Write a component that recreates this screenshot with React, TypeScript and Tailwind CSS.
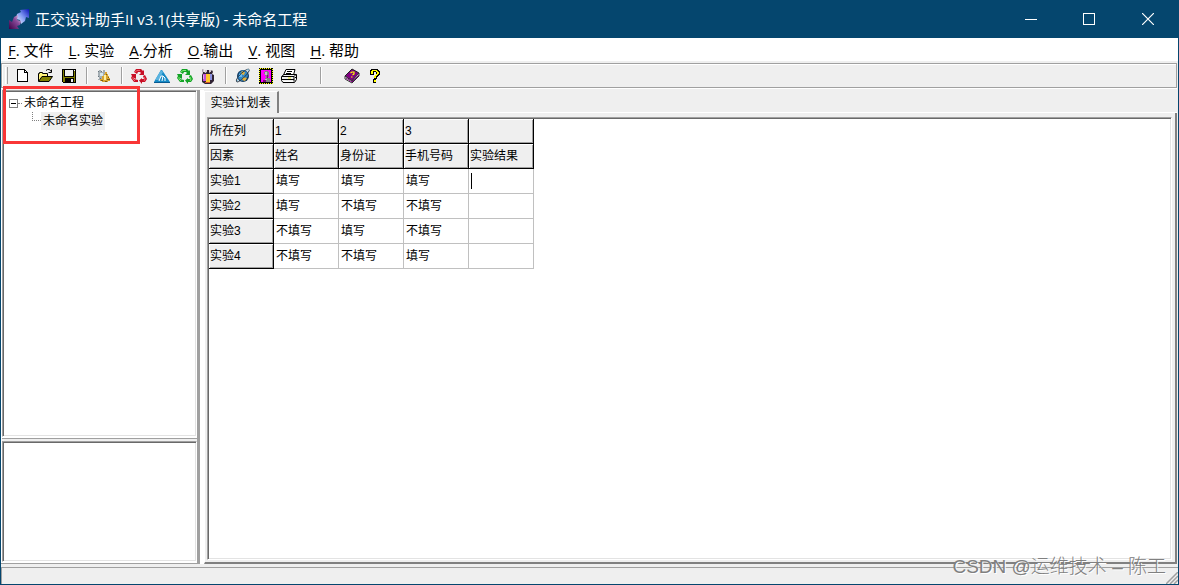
import React, { useState } from 'react';
import clsx from 'clsx';

const menus = [
  { key: 'F', rest: '. 文件' },
  { key: 'L', rest: '. 实验' },
  { key: 'A', rest: '.分析' },
  { key: 'O', rest: '.输出' },
  { key: 'V', rest: '. 视图' },
  { key: 'H', rest: '. 帮助' },
];

const columns = ['1', '2', '3', ''];
const factors = ['姓名', '身份证', '手机号码', '实验结果'];
const rows = [
  { name: '实验1', values: ['填写', '填写', '填写'] },
  { name: '实验2', values: ['填写', '不填写', '不填写'] },
  { name: '实验3', values: ['不填写', '填写', '不填写'] },
  { name: '实验4', values: ['不填写', '不填写', '填写'] },
];

const Icon = ({ children }: { children: React.ReactNode }) => (
  <svg viewBox="0 0 16 16" className="h-4 w-4 shrink-0" aria-hidden="true">
    {children}
  </svg>
);

const AppIcon = () => (
  <svg viewBox="0 0 22 22" className="h-[22px] w-[22px]" aria-hidden="true">
    <defs>
      <linearGradient id="up" x1="0" y1="1" x2="1" y2="0">
        <stop offset="0" stopColor="#f4f6ff" />
        <stop offset="0.5" stopColor="#7f9af2" />
        <stop offset="1" stopColor="#0a12b8" />
      </linearGradient>
      <linearGradient id="down" x1="0" y1="1" x2="1" y2="0">
        <stop offset="0" stopColor="#3d0046" />
        <stop offset="0.6" stopColor="#8a4c9c" />
        <stop offset="1" stopColor="#f3e2f5" />
      </linearGradient>
    </defs>
    <path d="M12 2 21 1 21 10 18 9 17 13 13 16 12 12 8 11 9 6 13 4z" fill="url(#up)" />
    <path d="M1 12 4 14 6 9 10 7 9 12 13 13 12 17 9 18 11 21 1 21z" fill="url(#down)" />
  </svg>
);

const NewIcon = () => (
  <Icon>
    <path d="M3.5 1.5h7l3 3v9h-10z" fill="#fff" stroke="#000" shapeRendering="crispEdges" />
    <path d="M10.5 1.5v3h3" fill="none" stroke="#000" shapeRendering="crispEdges" />
  </Icon>
);

const OpenIcon = () => (
  <Icon>
    <path d="M1.5 13V5.500h1v-1h3v1h5v3" fill="#ffff80" stroke="#000" />
    <path d="M2 6h8v3H5L2 13z" fill="#fff27a" />
    <path d="M1.500 13.500 5 8.500h10.500L12 13.500z" fill="#808000" stroke="#000" />
    <path d="M9 2.500 10.500 1.500h2l1.500 2M14.500 1.500v3h-3" fill="none" stroke="#000" />
  </Icon>
);

const SaveIcon = () => (
  <Icon>
    <g shapeRendering="crispEdges">
      <path d="M2.500 1.500h13v13h-12l-1-1z" fill="#808000" stroke="#000" />
      <path d="M5 2h8v6H5z" fill="#efefef" />
      <path d="M4 2h1v6h8V2h1v7H4zM5 10h9v5H5z" fill="#000" />
      <path d="M11 11h2v3h-2zM14 2h1v1h-1z" fill="#efefef" />
    </g>
  </Icon>
);

const GearIcon = () => (
  <Icon>
    <path d="M3 2h2v2H3zM7 2h2v2H7zM2 4h8v5H2zM3 9h6v2H3zM2 11h2v1H2z" fill="#a4aeb4" />
    <path d="M4 5h3v3H4z" fill="#d5e6ee" />
    <path d="M2 3h1v1H2zM5 3h1v1H5zM9 4h1v1H9zM2 8h1v1H2zM4 10h1v1H4z" fill="#66737b" />
    <path d="M9 4h2v2h1v2h1v2h1v3h-2v1H6v-1H4v-2h2V8h2V6h1z" fill="#d9a52f" />
    <path d="M8 7h2v5H8z" fill="#fff0a0" />
    <path d="M10 6h1v1h-1zM12 9h1v1h-1zM11 11h3v1h-3zM5 12h2v1H5zM9 13h2v1H9z" fill="#7d5b14" />
  </Icon>
);

const RecycleIcon = ({ color, light }: { color: string; light: string }) => (
  <Icon>
    <g fill={color}>
      <path d="M3 4 5 1h5l2 2 1-1v5H8l2-2-1-1H7L6 6z" />
      <path d="M12 8 14 7 16 11 14 14H11V16L8 12.500 11 10V11H13z" />
      <path d="M0 6H5V11L3.500 10 3 11 7 12V14H3L0 10 1 8z" />
    </g>
    <path d="M4 4 6 2.500h3M13 9l1 2-1 2M2 9v2l2 2" fill="none" stroke={light} />
  </Icon>
);

const TriangleIcon = () => (
  <Icon>
    <path d="M7 2h1l8 12-1 1H1l-1-1z" fill="#168ac5" />
    <path d="M7 2 1 12h4l4-8z" fill="#5ab3df" />
    <path d="m5 13 2-5h2l-1 5M9 8l2 2v3" fill="none" stroke="#fff" strokeWidth="1" />
    <path d="M0 14.500h16" stroke="#075a91" />
  </Icon>
);

const FigureIcon = () => (
  <Icon>
    <path d="M2 1h2v3l2 1 1-3h2v3l3-3 1 2-1 2 2 1v6l-3 3H5l-3-2V7l1-2z" fill="#302334" />
    <path d="M3 6h3v7H3z" fill="#c052d5" />
    <path d="M6 6h4v8H6z" fill="#ffc928" />
    <path d="M10 6h2v6h-2z" fill="#8b91df" />
    <path d="M2 1h2v3H3zM5 2h2v2H5zM9 2h2v2H9z" fill="#d4cad4" />
    <path d="M3 7h1v4H3z" fill="#e2a4ef" />
    <path d="M5 14h5v1H5z" fill="#d25728" />
  </Icon>
);

const GlobeIcon = () => (
  <Icon>
    <circle cx="8" cy="8" r="6" fill="#103a62" />
    <path d="M4 5 8 2l4 2 1 4-3 4-4 1-3-3z" fill="#3187c5" />
    <path d="m7 3 3 1-1 3-3-1zM8 9l4 1-2 3-3-1z" fill="#e4b33b" />
    <path d="M4 6h3v3H4z" fill="#64b5ec" />
    <path d="M2 14C0 13 3 8 8 4s7-3 6-1c-2 4-9 11-12 11z" fill="none" stroke="#26394a" />
    <path d="M12 2h2M2 12l1 1" stroke="#8ed0ef" />
  </Icon>
);

const StampIcon = () => (
  <Icon>
    <g shapeRendering="crispEdges">
      <path d="M1 0h14v16H1z" fill="#ffff00" />
      <path d="M1 .5h14M1 15.500h14" stroke="#000" strokeDasharray="1 1" />
      <path d="M1.500 0v16M14.500 0v16" stroke="#000" strokeDasharray="1 1" />
      <path d="M2 1h12v14H2z" fill="#000" />
      <path d="M3 2h10v12H3z" fill="#ff00ff" />
      <path d="M7 3h3v1h1v5H9v1h3v4H5v-2h2v-2h1V8H7V6H6V4h1z" fill="#808080" />
      <path d="M7 4h2v3H7zM7 11h2v1H7z" fill="#c0c0c0" />
      <path d="M5 12h3v2H5zM9 7h1v3H9z" fill="#800080" />
    </g>
  </Icon>
);

const PrintIcon = () => (
  <Icon>
    <path d="M5 1.500h9L12.500 7h-10z" fill="#fff" stroke="#000" />
    <path d="M6 3.500h5M5 5.500h5" stroke="#000" />
    <path d="M.5 8.500 3 6.500h12.500v5l-2 3H2L.5 12.500z" fill="#efefef" stroke="#000" />
    <path d="M1 8.500h12v5M1 11.500h12M13 8.500l2-2M14 10l1-1" fill="none" stroke="#000" />
    <path d="M7 10h3" stroke="#e2e200" />
    <path d="M3 13.500h9" stroke="#fff" />
  </Icon>
);

const BookIcon = () => (
  <Icon>
    <path d="M1 8 8 1l7 4-7 8z" fill="#800080" stroke="#202020" />
    <path d="m1 8 7 5 7-8v3l-7 7-7-4z" fill="#fff" stroke="#303030" />
    <path d="m2 10 6 4 7-7" fill="none" stroke="#800080" />
    <path d="M6.500 5 8 4h2v2L8.500 7M7 9h1.500" fill="none" stroke="#ffff00" strokeWidth="1.2" />
  </Icon>
);

const HelpIcon = () => (
  <Icon>
    <g shapeRendering="crispEdges">
      <path d="M4 1h7v1h1v1h1v4h-1v1h-1v1h-1v2h-1v4H6v-4h1V9h1V7h1V4H7v3H3V2h1z" fill="#000" />
      <path d="M5 2h5v1h1v1h1v2h-1v1h-1v1H9v2H7V8h1V7h1V6h1V4H9V3H6v3H4V3h1zM7 12h2v2H7z" fill="#ffff00" />
    </g>
  </Icon>
);

const toolGroups = [
  [
    { label: '新建', icon: <NewIcon /> },
    { label: '打开', icon: <OpenIcon /> },
    { label: '保存', icon: <SaveIcon /> },
  ],
  [{ label: '设置', icon: <GearIcon /> }],
  [
    { label: '直观分析', icon: <RecycleIcon color="#c80f25" light="#f0626c" /> },
    { label: '因素指标', icon: <TriangleIcon /> },
    { label: '交互作用', icon: <RecycleIcon color="#13a326" light="#7bea70" /> },
    { label: '方差分析', icon: <FigureIcon /> },
  ],
  [
    { label: '网页', icon: <GlobeIcon /> },
    { label: '图像', icon: <StampIcon /> },
    { label: '打印', icon: <PrintIcon /> },
  ],
  [
    { label: '手册', icon: <BookIcon /> },
    { label: '帮助', icon: <HelpIcon /> },
  ],
];

// width of the divider slot in front of each group
const dividerWidths = ['', 'w-[13px]', 'w-3', 'w-3', 'w-10'];

const TitleBar = () => (
  <header className="flex h-[38px] shrink-0 items-center bg-[#05466e] pr-px pl-2 text-white">
    <AppIcon />
    <h1 className="ml-[5px] flex-1 text-[15px]">正交设计助手II v3.1(共享版) - 未命名工程</h1>
    <button aria-label="最小化" className="flex h-full w-[58px] items-center justify-center">
      <span className="h-px w-3 bg-white" />
    </button>
    <button aria-label="最大化" className="flex h-full w-[58px] items-center justify-center">
      <span className="h-3 w-3 border border-white" />
    </button>
    <button aria-label="关闭" className="flex h-full w-[60px] items-center justify-center">
      <svg viewBox="0 0 12 12" className="h-3 w-3" aria-hidden="true">
        <path d="M0 0 12 12M12 0 0 12" stroke="#fff" strokeWidth="1.2" />
      </svg>
    </button>
  </header>
);

const Toolbar = () => (
  <div className="mr-px flex h-[25px] shrink-0 border border-[#a0a0a0] pl-[3px] shadow-[inset_1px_1px_0_#fff,0_1px_0_#fff]">
    <div className="my-[3px] mr-[3px] w-[3px] border-r border-[#a0a0a0] shadow-[inset_1px_0_0_#fff]" />
    {toolGroups.map((group, i) => (
      <React.Fragment key={i}>
        {i > 0 && (
          <div className={clsx('my-[3px] flex justify-center', dividerWidths[i])}>
            <span className="w-0.5 border-r border-white bg-[#a0a0a0]" />
          </div>
        )}
        {group.map((tool) => (
          <button
            key={tool.label}
            aria-label={tool.label}
            className="flex w-[23px] items-center pl-[3px]"
          >
            {tool.icon}
          </button>
        ))}
      </React.Fragment>
    ))}
  </div>
);

const sunken =
  'border border-t-[#a0a0a0] border-l-[#a0a0a0] border-r-white border-b-white bg-white p-px shadow-[inset_1px_1px_0_#696969,inset_-1px_-1px_0_#e3e3e3]';

const ProjectTree = () => {
  const [open, setOpen] = useState(true);

  return (
    <div className="px-1 pt-0.5 text-xs">
      <div className="flex h-[18px] items-center">
        <button
          aria-label="展开或折叠"
          onClick={() => setOpen(!open)}
          className="ml-px flex h-[9px] w-[9px] items-center justify-center border border-[#808080]"
        >
          <span className={clsx('w-[5px] bg-black', open ? 'h-px' : 'h-[5px]')} />
        </button>
        <span className="w-1 border-t border-dotted border-[#808080]" />
        <span className="px-0.5">未命名工程</span>
      </div>
      {open && (
        <div className="ml-6 flex h-[18px]">
          <span className="h-[9px] w-[9px] border-b border-l border-dotted border-[#808080]" />
          <span className="bg-[#efefef] px-0.5 leading-[18px]">未命名实验</span>
        </div>
      )}
    </div>
  );
};

const headCell =
  'h-[25px] border-r border-b border-black bg-[#efefef] px-px text-left font-normal shadow-[inset_1px_1px_0_#fff,inset_-1px_-1px_0_#a0a0a0]';
const bodyCell = 'h-[25px] border-r border-b border-[#c0c0c0] px-0.5';

const PlanTable = () => (
  <table className="w-[325px] table-fixed border-separate border-spacing-0 text-xs leading-4">
    <thead>
      <tr>
        <th className={headCell}>所在列</th>
        {columns.map((c, i) => (
          <th key={i} className={headCell}>
            {c}
          </th>
        ))}
      </tr>
      <tr>
        <th className={headCell}>因素</th>
        {factors.map((f) => (
          <th key={f} className={headCell}>
            {f}
          </th>
        ))}
      </tr>
    </thead>
    <tbody>
      {rows.map((row, i) => (
        <tr key={row.name}>
          <th scope="row" className={headCell}>
            {row.name}
          </th>
          {row.values.map((value, j) => (
            <td key={j} className={bodyCell}>
              {value}
            </td>
          ))}
          <td className={bodyCell}>
            <input
              aria-label={`${row.name} 实验结果`}
              className={clsx(
                'block h-4 w-full border-l outline-none',
                i === 0 ? 'border-black' : 'border-transparent'
              )}
            />
          </td>
        </tr>
      ))}
    </tbody>
  </table>
);

export default function App() {
  return (
    <div className="relative flex h-screen flex-col overflow-hidden border-x border-b border-[#05466e] bg-[#efefef] font-['Open_Sans','Noto_Sans_CJK_SC',sans-serif] text-black">
      <div className="-mx-px">
        <TitleBar />
      </div>
      <nav className="flex h-[23px] shrink-0 items-center gap-[15px] bg-white pt-0.5 pl-[7px] text-[15px]">
        {menus.map((menu) => (
          <button key={menu.key} className="whitespace-pre">
            <span className="underline underline-offset-2">{menu.key}</span>
            {menu.rest}
          </button>
        ))}
      </nav>
      <div className="h-0.5 shrink-0" />
      <Toolbar />

      <main className="mt-0.5 flex min-h-0 flex-1 font-['Liberation_Sans','Noto_Sans_CJK_SC',sans-serif]">
        <aside className="flex w-[196px] flex-col border-b border-[#a0a0a0] bg-white pl-px">
          <div className={clsx('min-h-0 flex-1', sunken)}>
            <ProjectTree />
          </div>
          <div className="mt-px h-[3px] border-t border-[#a0a0a0] bg-[#efefef]" />
          <div className={clsx('mb-px h-[121px]', sunken)} />
        </aside>
        <div className="w-[3px] bg-[#a0a0a0]" />
        <div className="w-1 bg-white" />

        <section className="flex min-w-0 flex-1 flex-col pr-px">
          <div className="flex h-[23px] shrink-0">
            <button className="mt-px w-[75px] border-t border-r-2 border-l border-t-white border-r-[#808080] border-l-white pr-px text-center text-xs">
              实验计划表
            </button>
            <div className="flex-1 border-b border-white" />
          </div>
          <div className="flex min-h-0 flex-1 border-r-2 border-b-2 border-l border-r-[#808080] border-b-[#808080] border-l-white pt-1 pr-[3px] pb-0.5 pl-0.5">
            <div className={clsx('min-w-0 flex-1 overflow-hidden', sunken)}>
              <PlanTable />
            </div>
          </div>
        </section>
      </main>

      <footer className="mt-[3px] flex h-[17px] shrink-0 items-end justify-end border-t border-l border-[#a0a0a0]">
        <svg viewBox="0 0 12 12" className="h-3 w-3" aria-hidden="true">
          <path d="M0 12 12 0M4 12l8-8M8 12l4-4" stroke="#a0a0a0" strokeWidth="1.5" />
        </svg>
      </footer>

      <div className="pointer-events-none absolute top-[86px] left-0.5 h-[58px] w-[137px] border-3 border-[#f93636]" />
      <div className="pointer-events-none absolute right-3 bottom-[3px] font-['Liberation_Sans','Noto_Sans_CJK_SC',sans-serif] text-[19px] leading-7 font-light text-[#808080] [text-shadow:1px_1px_0_#fff]">
        CSDN @运维技术 – 陈工
      </div>
    </div>
  );
}
